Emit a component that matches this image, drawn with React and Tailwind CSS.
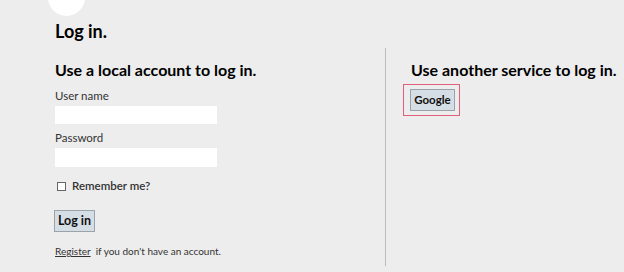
export default function App() {
  return (
    <div className="h-[272px] w-[624px] overflow-hidden bg-[#ededed] font-['Lato',sans-serif] text-[#222]">
      <div className="ml-[48px] -mt-[22px] h-[38px] w-[37px] rounded-full bg-white" />
      <h1 className="ml-[55px] mt-[4px] text-[18px] font-bold leading-[22px] text-black">Log in.</h1>
      <div className="mt-[6px] flex">
        <section className="w-[385px] pl-[55px] pt-[12px]">
          <h2 className="text-[16px] font-bold leading-[20px] text-black">Use a local account to log in.</h2>
          <form className="mt-[8px]">
            <label className="block text-[11.5px] leading-[16px] text-[#333]">User name</label>
            <input className="mt-[2px] block h-[18px] w-[162px] bg-white outline-none" />
            <label className="mt-[6px] block text-[11.5px] leading-[16px] text-[#333]">Password</label>
            <input type="password" className="mt-[2px] block h-[19px] w-[162px] bg-white outline-none" />
            <div className="ml-[2px] mt-[11px] flex items-center gap-[6px]">
              <span className="h-[9px] w-[9px] border border-[#666] bg-white" />
              <span className="text-[11.5px] font-semibold leading-[16px] text-[#333]">Remember me?</span>
            </div>
            <button type="button" className="-ml-px mt-[16px] block h-[22px] w-[41px] border border-[#9aa3aa] bg-[#d6dee5] text-[12.5px] font-bold leading-[18px] text-[#111]">
              Log in
            </button>
            <p className="mt-[12px] text-[10px] leading-[14px] text-[#333]">
              <span className="underline">Register</span>
              <span className="ml-[5px]">if you don't have an account.</span>
            </p>
          </form>
        </section>
        <section className="h-[218px] border-l border-[#bdbdbd] pl-[25px] pt-[12px]">
          <h2 className="text-[16px] font-bold leading-[20px] text-black">Use another service to log in.</h2>
          <div className="-ml-[8px] mt-[4px] inline-flex border border-[#e0607a] p-[4px] pl-[6px]">
            <button type="button" className="h-[22px] w-[45px] border border-[#9aa3aa] bg-[#d6dee5] text-[11.5px] font-bold leading-[18px] text-[#111]">
              Google
            </button>
          </div>
        </section>
      </div>
    </div>
  );
}
